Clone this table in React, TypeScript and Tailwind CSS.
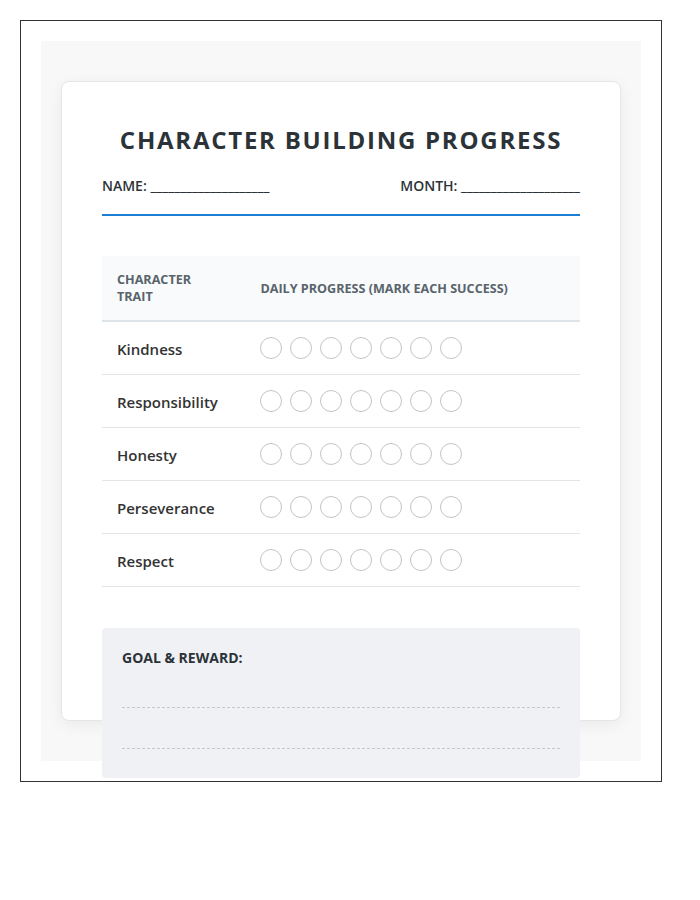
const traits = ['Kindness', 'Responsibility', 'Honesty', 'Perseverance', 'Respect']
const days = [0, 1, 2, 3, 4, 5, 6]

export default function App() {
  return (
    <div className="p-5 font-['Open_Sans','Noto_Sans',sans-serif] text-[#2c3338]">
      <div className="w-[642px] border border-[#333] p-5">
        <div className="h-[720px] bg-[#f8f8f8] px-5 py-10">
          <div className="h-[640px] rounded-lg border border-[#e6e6e6] bg-white px-10 py-10 shadow-[0_4px_16px_rgba(0,0,0,0.06)]">
            {/* 제목 */}
            <h1 className="mb-[18px] text-center text-[24px] font-bold leading-[36px] tracking-[1.75px]">
              CHARACTER BUILDING PROGRESS
            </h1>

            <div className="flex justify-between border-b-2 border-[#1a7fd4] pb-[18px] text-[14px] font-semibold leading-5">
              <span>NAME: ____________________</span>
              <span>MONTH: ____________________</span>
            </div>

            {/* 표 */}
            <table className="mt-10 w-full border-collapse">
              <thead>
                <tr className="border-b-2 border-[#dde5ea] bg-[#f9fafb]">
                  <th className="w-[30%] px-[15px] py-[15px] text-left text-[12.6px] font-bold leading-[17px] text-[#58646c]">
                    CHARACTER
                    <br />
                    TRAIT
                  </th>
                  <th className="px-[15px] py-[15px] text-left text-[12.6px] font-bold leading-[17px] text-[#58646c]">
                    DAILY PROGRESS (MARK EACH SUCCESS)
                  </th>
                </tr>
              </thead>
              <tbody>
                {traits.map((t) => (
                  <tr key={t} className="border-b border-[#e4e4e4]">
                    <td className="px-[15px] pb-[14px] pt-4 text-[15px] font-semibold leading-[22px] text-[#333]">{t}</td>
                    <td className="px-[15px] py-[15px]">
                      <div className="flex gap-2">
                        {days.map((d) => (
                          <div key={d} className="h-[22px] w-[22px] rounded-full border border-[#c4c4c4]" />
                        ))}
                      </div>
                    </td>
                  </tr>
                ))}
              </tbody>
            </table>

            {/* 목표 */}
            <div className="mt-[41px] rounded bg-[#f0f1f5] px-5 pb-[29px] pt-5">
              <div className="text-[14px] font-bold leading-5">GOAL &amp; REWARD:</div>
              <div className="h-10 border-b border-dashed border-[#c8c8c8]" />
              <div className="h-[41px] border-b border-dashed border-[#c8c8c8]" />
            </div>
          </div>
        </div>
      </div>
    </div>
  )
}
